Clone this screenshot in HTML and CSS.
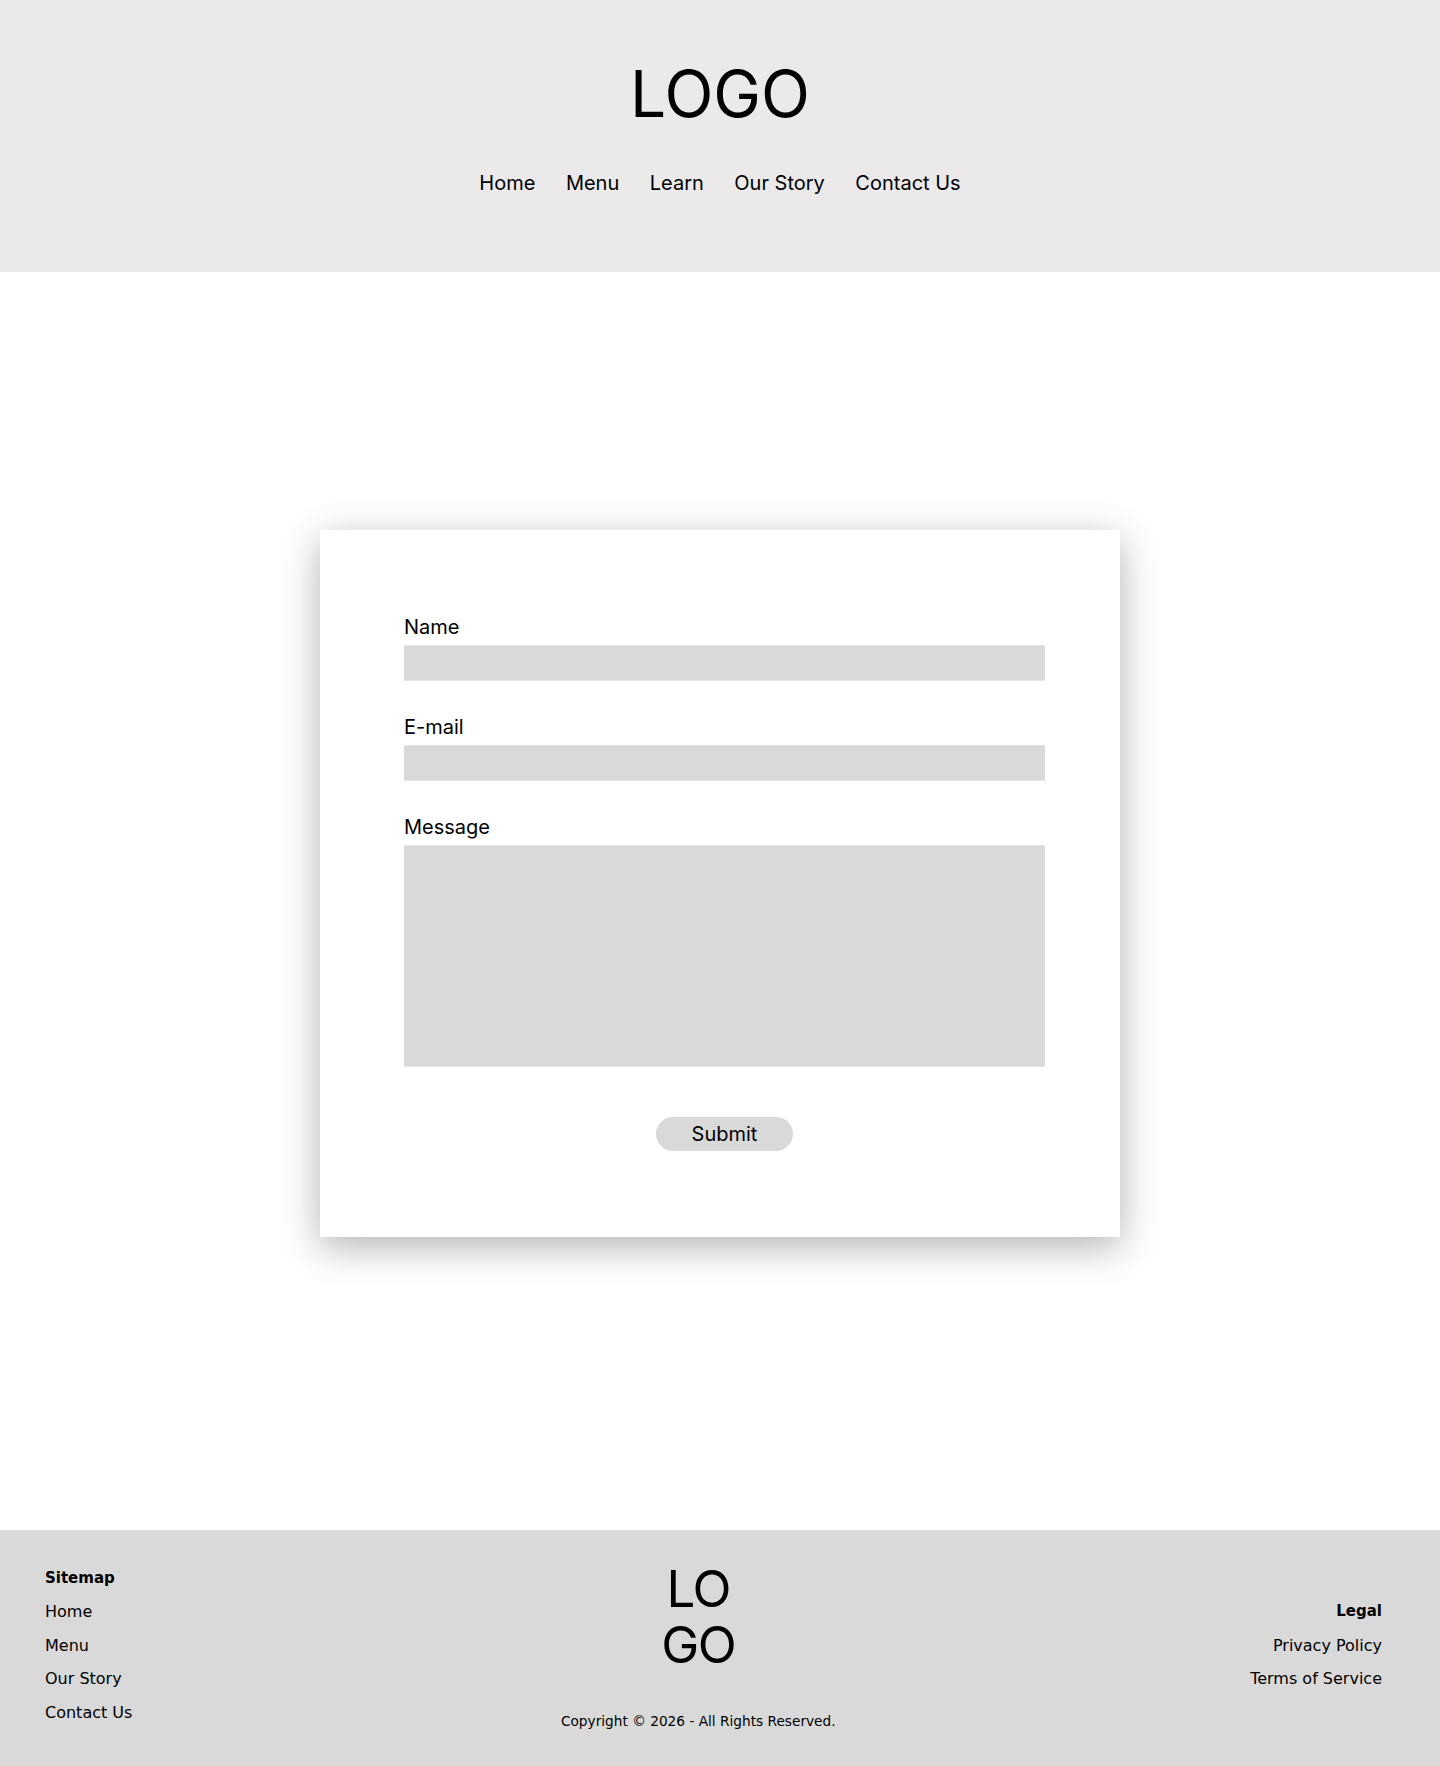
FILE: index.html
```html
<!DOCTYPE html>
<html lang="en">
<head>
<meta charset="utf-8">
<title>Contact Us</title>
<link rel="stylesheet" href="styles.css">
</head>
<body>
<header class="site-header">
  <div class="logo">LOGO</div>
  <nav class="main-nav">
    <a href="#">Home</a>
    <a href="#">Menu</a>
    <a href="#">Learn</a>
    <a href="#">Our Story</a>
    <a href="#">Contact Us</a>
  </nav>
</header>
<main class="main">
  <form class="card">
    <div class="field">
      <label class="label" for="name">Name</label>
      <input class="input" id="name" type="text">
    </div>
    <div class="field">
      <label class="label" for="email">E-mail</label>
      <input class="input" id="email" type="email">
    </div>
    <div class="field">
      <label class="label" for="message">Message</label>
      <textarea class="input textarea" id="message"></textarea>
    </div>
    <div class="actions">
      <button class="submit" type="button">Submit</button>
    </div>
  </form>
</main>
<footer class="site-footer">
  <div class="foot-col">
    <div class="foot-title">Sitemap</div>
    <a href="#">Home</a>
    <a href="#">Menu</a>
    <a href="#">Our Story</a>
    <a href="#">Contact Us</a>
  </div>
  <div class="foot-center">
    <div class="foot-logo">
      <span class="foot-logo-line">LO</span>
      <span class="foot-logo-line">GO</span>
    </div>
    <div class="copyright">Copyright © 2026 - All Rights Reserved.</div>
  </div>
  <div class="foot-col foot-right">
    <div class="foot-title">Legal</div>
    <a href="#">Privacy Policy</a>
    <a href="#">Terms of Service</a>
  </div>
</footer>
</body>
</html>
```
FILE: styles.css
```css
* { box-sizing: border-box; }
html, body { margin: 0; padding: 0; }
body {
  font-family: Inter, "Liberation Sans", sans-serif;
  color: #000;
  background: #fff;
}
a { color: inherit; text-decoration: none; }

.site-header {
  background: #ebe9ea;
  height: 272px;
  padding-top: 62px;
  display: flex;
  flex-direction: column;
  align-items: center;
}
.logo {
  font-size: 64px;
  line-height: 64px;
  font-weight: 400;
}
.main-nav {
  margin-top: 45px;
  display: flex;
  gap: 30.5px;
  font-size: 20px;
  line-height: 24px;
}

.main {
  padding: 258px 0 293px;
  display: flex;
  justify-content: center;
}
.card {
  width: 800px;
  margin: 0;
  background: #fff;
  padding: 85px 75px 86px 84px;
  box-shadow: 0 10px 36px rgba(0, 0, 0, 0.3);
  display: flex;
  flex-direction: column;
}
.field {
  display: flex;
  flex-direction: column;
  margin-bottom: 34px;
}
.field:nth-child(3) { margin-bottom: 50px; }
.label {
  font-size: 20px;
  line-height: 24px;
  margin-bottom: 6px;
}
.input {
  display: block;
  width: 100%;
  height: 36px;
  background: #d9d9d9;
  border: none;
  border-top: 1px solid #e6e6e6;
  border-bottom: 1px solid #e6e6e6;
  margin: 0;
  padding: 0;
  font: inherit;
  outline: none;
}
.textarea {
  height: 222px;
  resize: none;
}
.actions {
  display: flex;
  justify-content: center;
}
.submit {
  width: 137px;
  height: 34px;
  border: none;
  border-radius: 17px;
  background: #d9d9d9;
  font-family: Inter, "Liberation Sans", sans-serif;
  font-size: 20px;
  color: #000;
  padding: 0;
}

.site-footer {
  background: #d9d9d9;
  padding: 30px 58px 35px 45px;
  display: flex;
  justify-content: space-between;
  align-items: center;
  font-family: "DejaVu Sans", sans-serif;
}
.foot-col {
  display: flex;
  flex-direction: column;
  font-size: 16px;
  line-height: 33.4px;
}
.foot-right { text-align: right; }
.foot-title { font-weight: 700; font-size: 15px; }
.foot-center {
  display: flex;
  flex-direction: column;
  align-items: center;
  margin-left: 14px;
}
.foot-logo {
  display: flex;
  flex-direction: column;
  align-items: center;
  padding-top: 1px;
  font-family: Inter, "Liberation Sans", sans-serif;
  font-size: 51px;
  letter-spacing: -1.5px;
}
.foot-logo-line {
  display: block;
  height: 56px;
  line-height: 56px;
}
.copyright {
  margin-top: 38px;
  font-size: 13.7px;
  line-height: 20px;
}
```
